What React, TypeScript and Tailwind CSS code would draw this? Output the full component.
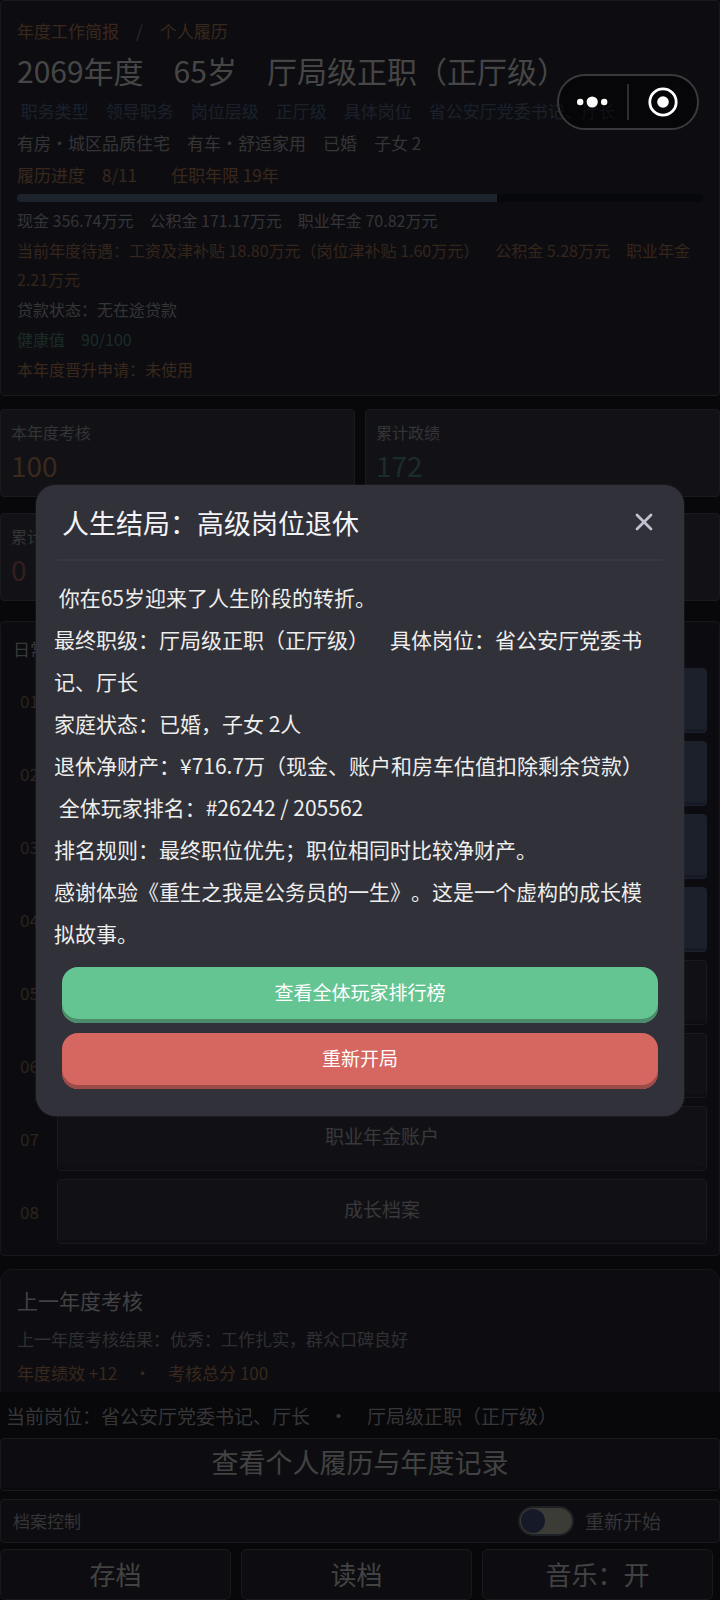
import { useState } from 'react';
import clsx from 'clsx';
import { X } from 'lucide-react';

const stats = [
  { label: '本年度考核', value: '100', color: 'text-[#3a2a1d]' },
  { label: '累计政绩', value: '172', color: 'text-[#1c2c2d]' },
  { label: '累计处分', value: '0', color: 'text-[#361e20]' },
  { label: '健康值', value: '90', color: 'text-[#1c2c2d]' },
];

const actions = [
  { name: '推进年度工作', primary: true },
  { name: '申请晋升', primary: true },
  { name: '家庭生活', primary: true },
  { name: '学习进修', primary: true },
  { name: '资产管理', primary: false },
  { name: '公积金账户', primary: false },
  { name: '职业年金账户', primary: false },
  { name: '成长档案', primary: false },
];

const endingText = [
  ' 你在65岁迎来了人生阶段的转折。',
  '最终职级：厅局级正职（正厅级）　具体岗位：省公安厅党委书记、厅长',
  '家庭状态：已婚，子女 2人',
  '退休净财产：¥716.7万（现金、账户和房车估值扣除剩余贷款）',
  ' 全体玩家排名：#26242 / 205562',
  '排名规则：最终职位优先；职位相同时比较净财产。',
  '感谢体验《重生之我是公务员的一生》。这是一个虚构的成长模拟故事。',
];

function Profile() {
  return (
    <section className="rounded-sm border border-[#19191d] bg-[#0d0d11] px-4 pt-4 pb-[11px]">
      <p className="text-[17px] leading-7 text-[#3a281c]">
        年度工作简报　<span className="text-[#2e2a2a]">/</span>　个人履历
      </p>
      <h1 className="text-[30px] leading-[50px] text-[#464646]">2069年度　65岁　厅局级正职（正厅级）</h1>
      <div className="whitespace-pre-wrap text-[17px] leading-8">
        <p className="text-[#1b212c]"> 职务类型　领导职务　岗位层级　正厅级　具体岗位　省公安厅党委书记、厅长</p>
        <p className="text-[#353538]">有房・城区品质住宅　有车・舒适家用　已婚　子女 2</p>
        <p className="text-[#3a281c]">履历进度　8/11　　任职年限 19年</p>
      </div>
      <div className="mt-[3px] mb-1 h-2 overflow-hidden rounded-full bg-[#06080c]">
        <div className="h-full w-[70%] bg-[#1d232d]" />
      </div>
      <div className="flex flex-col gap-px text-base leading-[29px]">
        <p className="text-[#353538]">现金 356.74万元　公积金 171.17万元　职业年金 70.82万元</p>
        <p className="text-[#35251b]">
          当前年度待遇：工资及津补贴 18.80万元（岗位津补贴 1.60万元）　公积金 5.28万元　职业年金 2.21万元
        </p>
        <p className="text-[#353538]">贷款状态：无在途贷款</p>
        <p className="text-[#1b2c28]">健康值　90/100</p>
        <p className="text-[#3a281c]">本年度晋升申请：未使用</p>
      </div>
    </section>
  );
}

function DailyActions() {
  return (
    <section className="rounded-sm border border-[#17171b] bg-[#0c0c10] px-3 pt-3 pb-[11px]">
      <h2 className="text-[17px] leading-[30px] text-[#39393b]">日常事务</h2>
      <ol className="mt-1 flex flex-col gap-2">
        {actions.map((action, index) => (
          <li key={action.name} className="flex items-center">
            <span className="w-11 pl-[7px] text-[17px] text-[#2d241d]">0{index + 1}</span>
            <button
              type="button"
              className={clsx(
                'h-[65px] flex-1 rounded-sm border pb-1 text-[19px] text-[#39393b]',
                action.primary
                  ? 'border-[#1b212c] bg-[#1b202b] shadow-[inset_0_-3px_0_#151a24]'
                  : 'border-[#1a1a1e] bg-[#111115] shadow-[inset_0_-3px_0_#0e0e12]'
              )}
            >
              {action.name}
            </button>
          </li>
        ))}
      </ol>
    </section>
  );
}

function BottomBar({ restart, onRestart }: { restart: boolean; onRestart: (value: boolean) => void }) {
  return (
    <footer className="shrink-0 bg-[#08080a] pt-[2px] text-[#424242]">
      <p className="px-[6px] text-[19px] leading-[44px] text-[#363638]">
        当前岗位：省公安厅党委书记、厅长　・　厅局级正职（正厅级）
      </p>
      <button
        type="button"
        className="block h-[53px] w-full rounded-sm border border-[#1a1a1d] bg-[#0d0d11] pb-1 text-[27px] shadow-[inset_0_-2px_0_#09090c]"
      >
        查看个人履历与年度记录
      </button>
      <div className="mt-2 flex h-11 items-center rounded-sm border border-[#1a1a1d] bg-[#0d0d11] pr-[58px] pl-3 text-[#353538]">
        <span className="flex-1 text-[17px]">档案控制</span>
        <label className="flex items-center gap-[11px] text-[19px]">
          <input
            type="checkbox"
            checked={restart}
            onChange={(e) => onRestart(e.target.checked)}
            className="peer sr-only"
          />
          <span className="flex h-[30px] w-14 items-center rounded-full border-2 border-[#1d2024] bg-[#3b3c36] px-px peer-checked:justify-end">
            <span className="size-6 rounded-full bg-[#161a28]" />
          </span>
          重新开始
        </label>
      </div>
      <div className="mt-[6px] grid grid-cols-3 gap-[10px] pr-[7px] text-[26px]">
        {['存档', '读档', '音乐：开'].map((name) => (
          <button key={name} type="button" className="h-[51px] rounded-md border border-[#1a1a1d] bg-[#0d0d11] pb-[2px]">
            {name}
          </button>
        ))}
      </div>
    </footer>
  );
}

function Capsule() {
  return (
    <div className="absolute top-[74px] right-[21px] z-20 flex h-14 w-[142px] items-center rounded-full border-2 border-[#3a3a3c] bg-black/50">
      <button type="button" aria-label="更多" className="flex h-full flex-1 items-center justify-center">
        <svg viewBox="0 0 32 12" className="h-3 w-8" fill="#fff">
          <circle cx="3.2" cy="6" r="3.2" />
          <circle cx="15.2" cy="6" r="5.6" />
          <circle cx="27.2" cy="6" r="3.2" />
        </svg>
      </button>
      <span className="h-9 w-[2px] bg-[#2e2e30]" />
      <button type="button" aria-label="关闭小程序" className="flex h-full flex-1 items-center justify-center">
        <svg viewBox="0 0 30 30" className="size-[30px]">
          <circle cx="15" cy="15" r="13.2" fill="none" stroke="#fff" strokeWidth="2.8" />
          <circle cx="15" cy="15" r="5.8" fill="#fff" />
        </svg>
      </button>
    </div>
  );
}

function EndingDialog({ onClose }: { onClose: () => void }) {
  return (
    <div className="absolute inset-0 z-10 flex items-center justify-center">
      <div
        role="dialog"
        aria-labelledby="ending-title"
        className="w-[90%] rounded-[20px] bg-[#31313a] pb-[27px] shadow-[0_0_2px_#31313a]"
      >
        <div className="mx-[21px] flex h-[76px] items-center justify-between border-b-2 border-[#363940] px-[5px]">
          <h2 id="ending-title" className="pt-1 text-[27px] text-[#f4f4f8]">
            人生结局：高级岗位退休
          </h2>
          <button type="button" aria-label="关闭" onClick={onClose} className="text-[#c2c2d0]">
            <X className="size-7" strokeWidth={2.4} />
          </button>
        </div>
        <div className="pt-[15px] pr-6 pl-[18px] text-[21px] leading-[42px] whitespace-pre-wrap text-[#eeeeec]">
          {endingText.map((line) => (
            <p key={line}>{line}</p>
          ))}
        </div>
        <div className="mx-[26px] mt-[13px] flex flex-col gap-[10px] text-[19px] text-white">
          <button type="button" className="h-14 rounded-2xl bg-[#65c592] pb-1 shadow-[inset_0_-4px_0_#4b8a6b]">
            查看全体玩家排行榜
          </button>
          <button type="button" className="h-14 rounded-2xl bg-[#d66660] pb-1 shadow-[inset_0_-4px_0_#9b4b48]">
            重新开局
          </button>
        </div>
      </div>
    </div>
  );
}

export default function App() {
  const [open, setOpen] = useState(true);
  const [restart, setRestart] = useState(false);

  return (
    <div className="relative flex h-screen flex-col bg-[#08080a] font-['Noto_Sans_CJK_SC',sans-serif] [text-spacing-trim:space-all]">
      <main className="min-h-0 flex-1 overflow-y-auto [scrollbar-width:none]">
        <Profile />
        <dl className="mt-[13px] mb-5 grid grid-cols-2 gap-x-[10px] gap-y-4">
          {stats.map((stat) => (
            <div key={stat.label} className="rounded-sm border border-[#1a1a1e] bg-[#121216] px-[10px] pt-2 pb-[13px]">
              <dt className="text-base leading-[29px] text-[#343437]">{stat.label}</dt>
              <dd className={clsx('text-[28px] leading-9', stat.color)}>{stat.value}</dd>
            </div>
          ))}
        </dl>
        <DailyActions />
        <section className="mt-[13px] rounded-xl border border-[#17171b] bg-[#0d0d11] px-4 pt-3 pb-6">
          <h2 className="text-[21px] leading-9 text-[#424244]">上一年度考核</h2>
          <div className="mt-1 text-[17px] leading-[34px]">
            <p className="text-[#303033]">上一年度考核结果：优秀：工作扎实，群众口碑良好</p>
            <p className="text-[#3a281c]">年度绩效 +12　・　考核总分 100</p>
          </div>
        </section>
      </main>
      <BottomBar restart={restart} onRestart={setRestart} />
      {open && <EndingDialog onClose={() => setOpen(false)} />}
      <Capsule />
    </div>
  );
}
